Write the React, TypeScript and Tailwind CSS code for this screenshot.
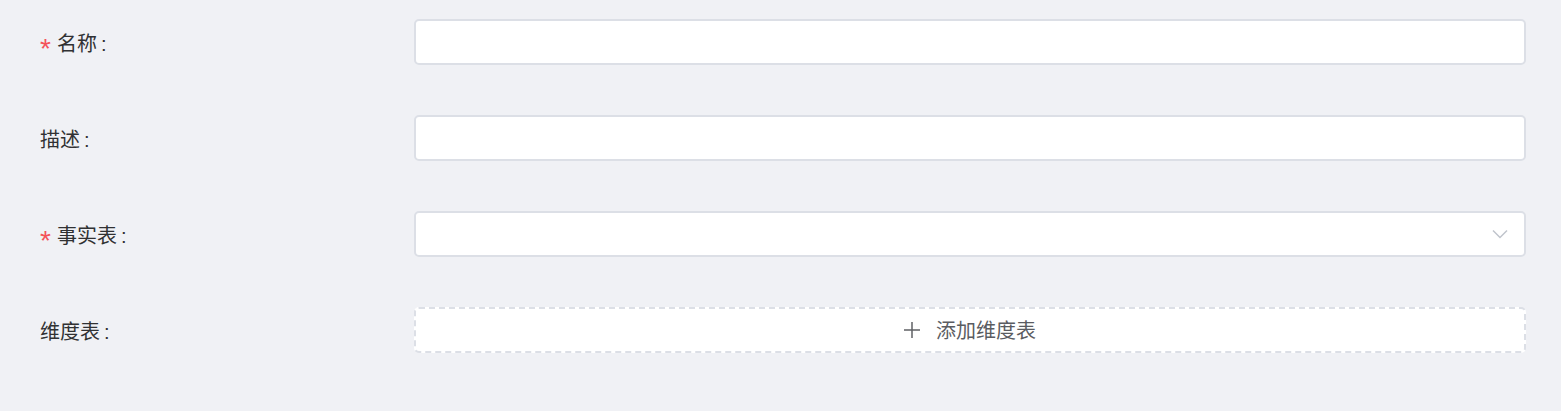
export default function App() {
    const rows = [
        { label: "名称", required: true, kind: "input" },
        { label: "描述", required: false, kind: "input" },
        { label: "事实表", required: true, kind: "select" },
        { label: "维度表", required: false, kind: "add" },
    ]

    return (
        <div className="w-[1561px] h-[411px] bg-[#f0f1f5] pt-[19px] pl-[40px] font-['Liberation_Sans','Noto_Sans_CJK_SC',sans-serif]">
            <div className="flex flex-col gap-[50px] w-[1486px]">
                {rows.map((row) => (
                    <div key={row.label} className="flex items-center h-[46px]">
                        <div className="w-[374px] flex items-center text-[20px] text-[#303133] pt-[3px]">
                            {row.required && (
                                <span className="w-[17px] text-[#f4525a] text-[28px] leading-none translate-y-[5px]">*</span>
                            )}
                            <span>{row.label}</span>
                            <span className="ml-[4px]">:</span>
                        </div>
                        {row.kind === "input" && (
                            <div className="flex-1 h-[46px] bg-white border-2 border-[#dcdfe6] rounded-[5px]" />
                        )}
                        {row.kind === "select" && (
                            <div className="flex-1 h-[46px] bg-white border-2 border-[#dcdfe6] rounded-[5px] flex items-center justify-end pr-[16px]">
                                <svg width="16" height="10" viewBox="0 0 16 10" fill="none">
                                    <path d="M1 1.5 L8 8.5 L15 1.5" stroke="#c0c4cc" strokeWidth="1.5" />
                                </svg>
                            </div>
                        )}
                        {row.kind === "add" && (
                            <div className="flex-1 h-[46px] bg-white border-2 border-dashed border-[#dcdfe6] rounded-[5px] flex items-center justify-center gap-[16px] text-[20px] text-[#5a5c61]">
                                <svg width="16" height="16" viewBox="0 0 16 16" fill="none">
                                    <path d="M8 0 V16 M0 8 H16" stroke="#606266" strokeWidth="1.5" />
                                </svg>
                                <span className="pt-[2px]">添加维度表</span>
                            </div>
                        )}
                    </div>
                ))}
            </div>
        </div>
    )
}
